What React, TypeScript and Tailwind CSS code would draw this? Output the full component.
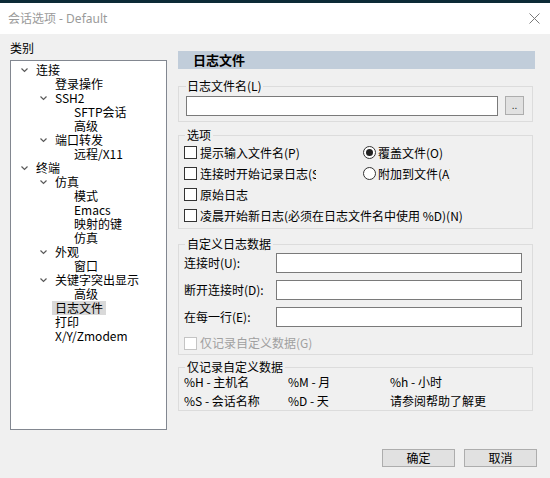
import React from "react";

const TREE: { t: string; l: number; c?: boolean; s?: boolean }[] = [
  { t: "连接", l: 0, c: true },
  { t: "登录操作", l: 1 },
  { t: "SSH2", l: 1, c: true },
  { t: "SFTP会话", l: 2 },
  { t: "高级", l: 2 },
  { t: "端口转发", l: 1, c: true },
  { t: "远程/X11", l: 2 },
  { t: "终端", l: 0, c: true },
  { t: "仿真", l: 1, c: true },
  { t: "模式", l: 2 },
  { t: "Emacs", l: 2 },
  { t: "映射的键", l: 2 },
  { t: "仿真", l: 2 },
  { t: "外观", l: 1, c: true },
  { t: "窗口", l: 2 },
  { t: "关键字突出显示", l: 1, c: true },
  { t: "高级", l: 2 },
  { t: "日志文件", l: 1, s: true },
  { t: "打印", l: 1 },
  { t: "X/Y/Zmodem", l: 1 },
];

const INDENT = ["pl-[10px]", "pl-[29px]", "pl-[48px]"];

function Chevron() {
  return (
    <svg width="7" height="5" viewBox="0 0 7 5" className="block">
      <polyline points="0.5,0.5 3.5,3.5 6.5,0.5" fill="none" stroke="#5a5a5a" strokeWidth="1.2" />
    </svg>
  );
}

function Checkbox({ disabled }: { disabled?: boolean }) {
  return (
    <span
      className={`w-[13px] h-[13px] shrink-0 border bg-white ${
        disabled ? "border-[#c4c4c4]" : "border-[#333]"
      }`}
    />
  );
}

function Radio({ checked }: { checked?: boolean }) {
  return (
    <span className="w-[13px] h-[13px] shrink-0 rounded-full border border-[#333] bg-white flex items-center justify-center">
      {checked && <span className="w-[7px] h-[7px] rounded-full bg-[#222]" />}
    </span>
  );
}

function TextBox({ className = "" }: { className?: string }) {
  return <div className={`h-[20px] border border-[#7a7a7a] bg-white ${className}`} />;
}

export default function App() {
  return (
    <div className="w-[550px] h-[478px] overflow-hidden bg-[#f0f0f0] text-[12px] text-black [font-family:'Noto_Sans_CJK_SC',sans-serif]">
      <div className="h-[3px] bg-[#0c2a36]" />
      <div className="h-[31px] bg-white flex items-center justify-between pl-[8px] pr-[10px]">
        <span className="text-[12px] text-[#9a9a9a] [font-family:'Noto_Sans','Noto_Sans_CJK_SC',sans-serif]">
          会话选项 - Default
        </span>
        <svg width="11" height="11" viewBox="0 0 11 11">
          <path d="M0.5 0.5 L10.5 10.5 M10.5 0.5 L0.5 10.5" stroke="#7a7a7a" strokeWidth="1" />
        </svg>
      </div>

      <div className="flex pt-[6px]">
        {/* left: categories */}
        <div className="ml-[10px] w-[157px] flex flex-col">
          <div className="h-[16px] leading-[16px]">类别</div>
          <div className="mt-[4px] h-[370px] border border-[#828790] bg-white pt-[2px]">
            {TREE.map((it, i) => (
              <div key={i} className={`h-[14px] flex items-center ${INDENT[it.l]}`}>
                <span className="w-[15px] shrink-0 flex items-center">{it.c && <Chevron />}</span>
                <span
                  className={`block h-[14px] leading-[14px] whitespace-nowrap ${
                    it.s ? "bg-[#d9d9d9] -ml-[3px] px-[3px]" : ""
                  }`}
                >
                  {it.t}
                </span>
              </div>
            ))}
          </div>
        </div>

        {/* right: log file panel */}
        <div className="ml-[11px] w-[357px] pt-[11px]">
          <div className="h-[18px] bg-[#c1cdda] pl-[15px] flex items-center font-bold text-[13px]">日志文件</div>

          <fieldset className="mt-[9px] w-[355px] border border-[#dcdcdc] pl-[7px] pb-[5px]">
            <legend className="px-[1px] leading-[16px]">日志文件名(L)</legend>
            <div className="mt-[2px] flex items-center">
              <TextBox className="w-[312px]" />
              <div className="ml-[7px] -mt-[2px] w-[19px] h-[19px] border border-[#adadad] bg-[#e1e1e1] flex items-center justify-center text-[10px] leading-none text-[#333]">
                ..
              </div>
            </div>
          </fieldset>

          <fieldset className="mt-[5px] w-[355px] border border-[#dcdcdc] pl-[5px] pb-[2px]">
            <legend className="ml-[1px] px-[2px] leading-[16px]">选项</legend>
            <div className="-mt-[1px] flex flex-col">
              <div className="h-[21px] flex items-center">
                <div className="w-[179px] flex items-center gap-[3px]">
                  <Checkbox />
                  <span className="whitespace-nowrap">提示输入文件名(P)</span>
                </div>
                <div className="flex items-center gap-[2px]">
                  <Radio checked />
                  <span className="whitespace-nowrap">覆盖文件(O)</span>
                </div>
              </div>
              <div className="h-[21px] flex items-center">
                <div className="w-[179px] flex items-center gap-[3px]">
                  <Checkbox />
                  <span className="w-[116px] overflow-hidden whitespace-nowrap">连接时开始记录日志(S)</span>
                </div>
                <div className="flex items-center gap-[2px]">
                  <Radio />
                  <span className="w-[72px] overflow-hidden whitespace-nowrap">附加到文件(A)</span>
                </div>
              </div>
              <div className="h-[21px] flex items-center gap-[3px]">
                <Checkbox />
                <span>原始日志</span>
              </div>
              <div className="h-[21px] flex items-center gap-[3px]">
                <Checkbox />
                <span className="whitespace-nowrap">凌晨开始新日志(必须在日志文件名中使用 %D)(N)</span>
              </div>
            </div>
          </fieldset>

          <fieldset className="mt-[7px] w-[355px] border border-[#dcdcdc] pl-[5px] pb-[3px]">
            <legend className="ml-[1px] px-[2px] leading-[16px]">自定义日志数据</legend>
            <div className="mt-[1px] flex flex-col gap-[7px]">
              {["连接时(U):", "断开连接时(D):", "在每一行(E):"].map((l) => (
                <div key={l} className="flex items-center">
                  <span className="w-[92px] whitespace-nowrap">{l}</span>
                  <TextBox className="w-[246px]" />
                </div>
              ))}
            </div>
            <div className="mt-[8px] h-[16px] flex items-center gap-[3px] text-[#a0a0a0]">
              <Checkbox disabled />
              <span>仅记录自定义数据(G)</span>
            </div>
          </fieldset>

          <fieldset className="mt-[4px] w-[355px] border border-[#dcdcdc] pl-[5px]">
            <legend className="ml-[1px] px-[2px] leading-[16px]">仅记录自定义数据</legend>
            <div className="-mt-[3px] grid grid-cols-[104px_102px_1fr] auto-rows-[19px] items-center whitespace-nowrap">
              <span>%H - 主机名</span>
              <span>%M - 月</span>
              <span>%h - 小时</span>
              <span>%S - 会话名称</span>
              <span>%D - 天</span>
              <span>请参阅帮助了解更</span>
            </div>
          </fieldset>
        </div>
      </div>

      <div className="mt-[19px] flex justify-end gap-[9px] pr-[13px]">
        <button className="w-[73px] h-[18px] border border-[#adadad] bg-[#e1e1e1] flex items-center justify-center leading-none">
          确定
        </button>
        <button className="w-[73px] h-[18px] border border-[#adadad] bg-[#e1e1e1] flex items-center justify-center leading-none">
          取消
        </button>
      </div>
    </div>
  );
}
